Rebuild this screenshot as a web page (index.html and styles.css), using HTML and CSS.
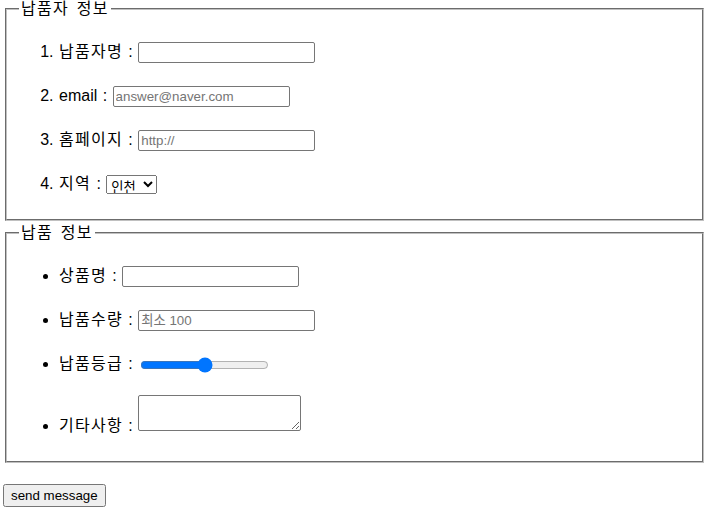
FILE: index.html
```html
<!DOCTYPE html>
<html lang="ko">
<head>
<meta charset="utf-8">
<title>납품 정보</title>
<link rel="stylesheet" href="styles.css">
</head>
<body>
<form class="form">
  <fieldset class="box">
    <legend class="legend">납품자 정보</legend>
    <ol class="list">
      <li class="item"><label><span class="ko">납품자명</span> : <input type="text" class="field"></label></li>
      <li class="item"><label>email : <input type="email" class="field" placeholder="answer@naver.com"></label></li>
      <li class="item"><label><span class="ko">홈페이지</span> : <input type="url" class="field" placeholder="http://"></label></li>
      <li class="item"><label><span class="ko">지역</span> : <select class="pick"><option>인천</option><option>서울</option></select></label></li>
    </ol>
  </fieldset>
  <fieldset class="box">
    <legend class="legend">납품 정보</legend>
    <ul class="list">
      <li class="item"><label><span class="ko">상품명</span> : <input type="text" class="field"></label></li>
      <li class="item"><label><span class="ko">납품수량</span> : <input type="number" class="field" placeholder="최소 100"></label></li>
      <li class="item"><label><span class="ko">납품등급</span> : <input type="range" class="slider" min="0" max="10" value="5"></label></li>
      <li class="item item-tall"><label><span class="ko">기타사항</span> : <textarea class="memo"></textarea></label></li>
    </ul>
  </fieldset>
  <div class="actions"><button type="submit" class="send">send message</button></div>
</form>
</body>
</html>
```
FILE: styles.css
```css
body {
  margin: 0 3px;
  font-family: "Liberation Sans", "Noto Sans CJK KR", sans-serif;
  font-size: 16px;
  word-spacing: 1px;
  color: #000;
  background: #fff;
}

.form {
  margin: 0;
}

.box {
  margin: 0 2px 3px;
  padding: 0 12px;
  border: 2px groove rgb(192, 192, 192);
  min-width: 0;
}

.legend {
  padding: 0 2px;
  line-height: 17px;
  letter-spacing: 1.3px;
  word-spacing: 2px;
}

.ko {
  letter-spacing: 1.25px;
}

.list {
  margin: 24px 0;
  padding-left: 40px;
}

.item {
  height: 22px;
  line-height: 22px;
  margin-bottom: 22px;
}

.item:last-child {
  margin-bottom: 0;
}

.item-tall {
  height: auto;
  margin-top: -2px;
}

.field {
  box-sizing: border-box;
  width: 177px;
  height: 21px;
  margin: 0;
  padding: 1px 2px;
  border: 1px solid #767676;
  border-radius: 2px;
  font-family: "Liberation Sans", Arial, "Noto Sans CJK KR", sans-serif;
  font-size: 13.33px;
  word-spacing: 0;
  vertical-align: middle;
}

.field::placeholder {
  color: #757575;
}

.field::-webkit-outer-spin-button,
.field::-webkit-inner-spin-button {
  -webkit-appearance: none;
  margin: 0;
}

.pick {
  box-sizing: border-box;
  width: 51px;
  height: 19px;
  margin: 0;
  font-family: "Noto Sans CJK KR", sans-serif;
  font-size: 13.33px;
  word-spacing: 0;
  vertical-align: middle;
}

.slider {
  width: 129px;
  margin: 2px;
  vertical-align: middle;
}

.memo {
  box-sizing: border-box;
  width: 163px;
  height: 36px;
  margin: 0;
  border: 1px solid #767676;
  border-radius: 2px;
  vertical-align: baseline;
}

.actions {
  margin: 21px 0 0;
}

.send {
  font-family: "Liberation Sans", Arial, sans-serif;
  font-size: 13.33px;
  word-spacing: 0;
  padding: 2px 6px;
  margin: 0;
}
```
